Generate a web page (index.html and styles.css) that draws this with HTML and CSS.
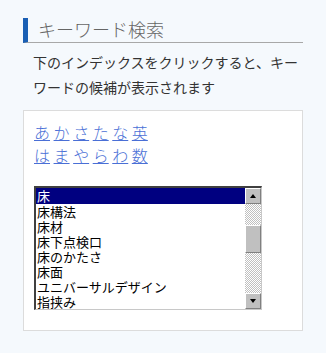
FILE: index.html
```html
<!DOCTYPE html>
<html lang="ja">
<head>
    <meta charset="UTF-8">
    <meta name="viewport" content="width=device-width, initial-scale=1.0">
    <title>キーワード検索</title>
    <link rel="stylesheet" href="styles.css">
</head>
<body>
    <div class="wrap">
        <h2 class="title">キーワード検索</h2>
        <p class="lead">下のインデックスをクリックすると、キーワードの候補が表示されます</p>
        <div class="search-box">
            <div class="kana">
                <a href="#">あ</a> <a href="#">か</a> <a href="#">さ</a> <a href="#">た</a> <a href="#">な</a> <a href="#">英</a><br>
                <a href="#">は</a> <a href="#">ま</a> <a href="#">や</a> <a href="#">ら</a> <a href="#">わ</a> <a href="#">数</a>
            </div>
            <div class="listbox">
                <ul class="items">
                    <li class="selected">床</li>
                    <li>床構法</li>
                    <li>床材</li>
                    <li>床下点検口</li>
                    <li>床のかたさ</li>
                    <li>床面</li>
                    <li>ユニバーサルデザイン</li>
                    <li>指挟み</li>
                </ul>
                <div class="scrollbar">
                    <div class="arrow up"></div>
                    <div class="track"></div>
                    <div class="thumb"></div>
                    <div class="track long"></div>
                    <div class="arrow down"></div>
                </div>
            </div>
        </div>
    </div>
</body>
</html>
```

FILE: styles.css
```css
body {
    margin: 0;
    padding: 0;
    background-color: #f5f9fd;
    font-family: "Noto Sans CJK JP", "Noto Sans", sans-serif;
    color: #333;
}
.wrap {
    padding: 18px 23px 0 23px;
}
.title {
    margin: 0;
    height: 24px;
    line-height: 22px;
    padding-left: 10px;
    border-left: 5px solid #1a5fb4;
    border-bottom: 1px solid #a8a8a8;
    font-size: 18px;
    font-weight: 300;
    color: #666;
}
.lead {
    margin: 7px 0 10px 0;
    padding-left: 10px;
    font-size: 14px;
    line-height: 25px;
    color: #333;
}
.search-box {
    background-color: #fff;
    border: 1px solid #dcdcdc;
    padding: 10px 10px 20px 10px;
}
.kana {
    font-size: 16px;
    line-height: 23px;
    font-weight: 300;
}
.kana a {
    color: #4a6fd6;
    text-decoration: underline;
}
.listbox {
    display: flex;
    margin-top: 19px;
    width: 225px;
    height: 121px;
    border-top: 2px solid #404040;
    border-left: 2px solid #404040;
    border-right: 1px solid #c8c8c8;
    border-bottom: 1px solid #c8c8c8;
}
.items {
    flex: 1;
    list-style: none;
    margin: 0;
    padding: 0;
    font-size: 13px;
    line-height: 15px;
    color: #000;
    overflow: hidden;
}
.items li {
    height: 15px;
    padding-left: 1px;
    white-space: nowrap;
}
.items li.selected {
    background-color: #000080;
    color: #fff;
    height: 16px;
}
.scrollbar {
    width: 16px;
    display: flex;
    flex-direction: column;
}
.arrow {
    height: 14px;
    background-color: #c0c0c0;
    border-top: 1px solid #fff;
    border-left: 1px solid #fff;
    border-right: 1px solid #808080;
    border-bottom: 1px solid #808080;
    position: relative;
}
.arrow::after {
    content: "";
    position: absolute;
    left: 4px;
    width: 0;
    height: 0;
    border-left: 3px solid transparent;
    border-right: 3px solid transparent;
}
.arrow.up::after {
    top: 5px;
    border-bottom: 4px solid #000;
}
.arrow.down::after {
    top: 5px;
    border-top: 4px solid #000;
}
.track {
    height: 22px;
    background: repeating-conic-gradient(#c0c0c0 0 25%, #fff 0 50%) 0 0 / 2px 2px;
}
.track.long {
    height: 41px;
}
.thumb {
    height: 26px;
    background-color: #c0c0c0;
    border-top: 1px solid #fff;
    border-left: 1px solid #fff;
    border-right: 1px solid #808080;
    border-bottom: 1px solid #808080;
}
```
